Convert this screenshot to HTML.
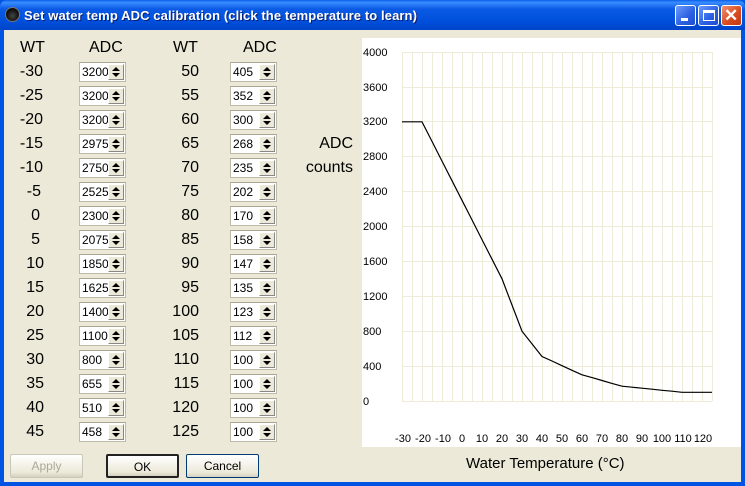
<!DOCTYPE html>
<html><head><style>
*{margin:0;padding:0;box-sizing:border-box}
body{width:745px;height:486px;overflow:hidden;background:#0054E3;font-family:"Liberation Sans",Arial,sans-serif;position:relative}
.title{position:absolute;left:0;top:0;width:745px;height:30px;background:linear-gradient(#0A5FE8 0%,#3A8CFF 8%,#0A5AE6 30%,#0050DC 70%,#0044C8 100%);border-radius:7px 7px 0 0}
.ttext{position:absolute;left:24px;top:8px;color:#fff;font-weight:bold;font-size:13px;text-shadow:1px 1px #0a1e70;letter-spacing:0.1px}
.ico{position:absolute;left:5px;top:7px;width:15px;height:15px;border-radius:50%;background:radial-gradient(circle at 50% 60%,#444 0,#111 60%,#000 100%);border:1px solid #777}
.btn{position:absolute;top:5px;width:21px;height:21px;border:1px solid #fff;border-radius:3px;background:linear-gradient(135deg,#6E9BFF,#2A5FE0 60%,#1D4FD0)}
.client{position:absolute;left:4px;top:30px;width:737px;height:452px;background:#ECE9D8}
.lbl{position:absolute;font-size:16px;color:#000;text-align:right}
.sp{position:absolute;width:47px;height:20px;background:#fff;border:1px solid #bdbaa8;border-top-color:#a8a595;font-size:12px;padding:2px 0 0 2px}
.sp i{position:absolute;right:1px;top:1px;width:16px;height:16px;background:#ECE9D8;border:1px solid #fff;border-right-color:#888;border-bottom-color:#888}
.sp i:before{content:"";position:absolute;left:3px;top:2px;border:4px solid transparent;border-bottom:4px solid #000;border-top:0}
.sp i:after{content:"";position:absolute;left:3px;top:8px;border:4px solid transparent;border-top:4px solid #000;border-bottom:0}
.pb{position:absolute;top:454px;width:73px;height:24px;border:1px solid #aaa;border-radius:2px;background:linear-gradient(#fff,#ECE9D8 80%,#d6d0c0);font-size:12px;text-align:center;line-height:22px}
</style></head><body>
<div class="title"><div class="ico"></div><div class="ttext">Set water temp ADC calibration (click the temperature to learn)</div>
<div class="btn" style="left:675px"><div style="position:absolute;left:5px;top:12px;width:7px;height:3px;background:#fff"></div></div>
<div class="btn" style="left:698px"><div style="position:absolute;left:4px;top:4px;width:12px;height:11px;border:1px solid #fff;border-top:3px solid #fff"></div></div>
<div class="btn" style="left:721px;background:linear-gradient(135deg,#F09070,#D8481C 60%,#C03A10)"><div style="position:absolute;left:2px;top:1px;color:#fff;font-size:17px;font-weight:bold;line-height:17px">✕</div></div>
</div>
<div class="client"></div>
<div style="position:absolute;left:0;top:0">
<div class="lbl" style="left:20px;top:39px">WT</div>
<div class="lbl" style="left:89px;top:39px">ADC</div>
<div class="lbl" style="left:173px;top:39px">WT</div>
<div class="lbl" style="left:243px;top:39px">ADC</div>
<div class="lbl" style="left:305px;top:135px;width:48px">ADC</div>
<div class="lbl" style="left:300px;top:159px;width:53px">counts</div>
</div>
<div id="rows">
<div class="lbl" style="left:0;top:63px;width:43px">-30</div><div class="sp" style="left:79px;top:62px">3200<i></i></div><div class="lbl" style="left:150px;top:63px;width:49px">50</div><div class="sp" style="left:230px;top:62px">405<i></i></div>
<div class="lbl" style="left:0;top:87px;width:43px">-25</div><div class="sp" style="left:79px;top:86px">3200<i></i></div><div class="lbl" style="left:150px;top:87px;width:49px">55</div><div class="sp" style="left:230px;top:86px">352<i></i></div>
<div class="lbl" style="left:0;top:111px;width:43px">-20</div><div class="sp" style="left:79px;top:110px">3200<i></i></div><div class="lbl" style="left:150px;top:111px;width:49px">60</div><div class="sp" style="left:230px;top:110px">300<i></i></div>
<div class="lbl" style="left:0;top:135px;width:43px">-15</div><div class="sp" style="left:79px;top:134px">2975<i></i></div><div class="lbl" style="left:150px;top:135px;width:49px">65</div><div class="sp" style="left:230px;top:134px">268<i></i></div>
<div class="lbl" style="left:0;top:159px;width:43px">-10</div><div class="sp" style="left:79px;top:158px">2750<i></i></div><div class="lbl" style="left:150px;top:159px;width:49px">70</div><div class="sp" style="left:230px;top:158px">235<i></i></div>
<div class="lbl" style="left:0;top:183px;width:41px">-5</div><div class="sp" style="left:79px;top:182px">2525<i></i></div><div class="lbl" style="left:150px;top:183px;width:49px">75</div><div class="sp" style="left:230px;top:182px">202<i></i></div>
<div class="lbl" style="left:0;top:207px;width:40px">0</div><div class="sp" style="left:79px;top:206px">2300<i></i></div><div class="lbl" style="left:150px;top:207px;width:49px">80</div><div class="sp" style="left:230px;top:206px">170<i></i></div>
<div class="lbl" style="left:0;top:231px;width:40px">5</div><div class="sp" style="left:79px;top:230px">2075<i></i></div><div class="lbl" style="left:150px;top:231px;width:49px">85</div><div class="sp" style="left:230px;top:230px">158<i></i></div>
<div class="lbl" style="left:0;top:255px;width:44px">10</div><div class="sp" style="left:79px;top:254px">1850<i></i></div><div class="lbl" style="left:150px;top:255px;width:49px">90</div><div class="sp" style="left:230px;top:254px">147<i></i></div>
<div class="lbl" style="left:0;top:279px;width:44px">15</div><div class="sp" style="left:79px;top:278px">1625<i></i></div><div class="lbl" style="left:150px;top:279px;width:49px">95</div><div class="sp" style="left:230px;top:278px">135<i></i></div>
<div class="lbl" style="left:0;top:303px;width:44px">20</div><div class="sp" style="left:79px;top:302px">1400<i></i></div><div class="lbl" style="left:150px;top:303px;width:49px">100</div><div class="sp" style="left:230px;top:302px">123<i></i></div>
<div class="lbl" style="left:0;top:327px;width:44px">25</div><div class="sp" style="left:79px;top:326px">1100<i></i></div><div class="lbl" style="left:150px;top:327px;width:49px">105</div><div class="sp" style="left:230px;top:326px">112<i></i></div>
<div class="lbl" style="left:0;top:351px;width:44px">30</div><div class="sp" style="left:79px;top:350px">800<i></i></div><div class="lbl" style="left:150px;top:351px;width:49px">110</div><div class="sp" style="left:230px;top:350px">100<i></i></div>
<div class="lbl" style="left:0;top:375px;width:44px">35</div><div class="sp" style="left:79px;top:374px">655<i></i></div><div class="lbl" style="left:150px;top:375px;width:49px">115</div><div class="sp" style="left:230px;top:374px">100<i></i></div>
<div class="lbl" style="left:0;top:399px;width:44px">40</div><div class="sp" style="left:79px;top:398px">510<i></i></div><div class="lbl" style="left:150px;top:399px;width:49px">120</div><div class="sp" style="left:230px;top:398px">100<i></i></div>
<div class="lbl" style="left:0;top:423px;width:44px">45</div><div class="sp" style="left:79px;top:422px">458<i></i></div><div class="lbl" style="left:150px;top:423px;width:49px">125</div><div class="sp" style="left:230px;top:422px">100<i></i></div>
</div>
<div class="pb" style="left:10px;color:#aca899;border-color:#c9c7ba">Apply</div>
<div class="pb" style="left:106px;border:2px solid #222">OK</div>
<div class="pb" style="left:186px;border-color:#003c74">Cancel</div>
<div style="position:absolute;left:466px;top:455px;font-size:15px">Water Temperature (°C)</div>
<svg style="position:absolute;left:0;top:0" width="745" height="486" font-family="Liberation Sans,Arial,sans-serif" font-size="11">
<rect x="362" y="38" width="379" height="409" fill="#fff"/>
<g stroke="#EEEBD8" stroke-width="1">
<path d="M402.5 52V401M412.5 52V401M422.5 52V401M432.5 52V401M442.5 52V401M452.5 52V401M462.5 52V401M472.5 52V401M482.5 52V401M492.5 52V401M502.5 52V401M512.5 52V401M522.5 52V401M532.5 52V401M542.5 52V401M552.5 52V401M562.5 52V401M572.5 52V401M582.5 52V401M592.5 52V401M602.5 52V401M612.5 52V401M622.5 52V401M632.5 52V401M642.5 52V401M652.5 52V401M662.5 52V401M672.5 52V401M682.5 52V401M692.5 52V401M702.5 52V401M712.5 52V401"/>
<path d="M402 52.5H712M402 87.5H712M402 121.5H712M402 156.5H712M402 191.5H712M402 226.5H712M402 261.5H712M402 296.5H712M402 331.5H712M402 366.5H712M402 401.5H712"/>
</g>
<g fill="#000">
<text x="363" y="56">4000</text><text x="363" y="91">3600</text><text x="363" y="125">3200</text><text x="363" y="160">2800</text><text x="363" y="195">2400</text><text x="363" y="230">2000</text><text x="363" y="265">1600</text><text x="363" y="300">1200</text><text x="363" y="335">800</text><text x="363" y="370">400</text><text x="363" y="405">0</text>
<text y="442" text-anchor="middle"><tspan x="403">-30</tspan><tspan x="423">-20</tspan><tspan x="443">-10</tspan><tspan x="462">0</tspan><tspan x="482">10</tspan><tspan x="502">20</tspan><tspan x="522">30</tspan><tspan x="542">40</tspan><tspan x="562">50</tspan><tspan x="582">60</tspan><tspan x="602">70</tspan><tspan x="622">80</tspan><tspan x="642">90</tspan><tspan x="662">100</tspan><tspan x="683">110</tspan><tspan x="703">120</tspan></text>
</g>
<polyline fill="none" stroke="#000" stroke-width="1.2" points="402,121.8 412,121.8 422,121.8 432,141.4 442,161.1 452,180.7 462,200.3 472,219.9 482,239.6 492,259.2 502,278.8 512,305 522,331.2 532,343.9 542,356.5 552,361 562,365.7 572,370.3 582,374.8 592,377.6 602,380.5 612,383.4 622,386.2 632,387.2 642,388.2 652,389.2 662,390.3 672,391.2 682,392.3 692,392.3 702,392.3 712,392.3"/>
</svg>
</body></html>
